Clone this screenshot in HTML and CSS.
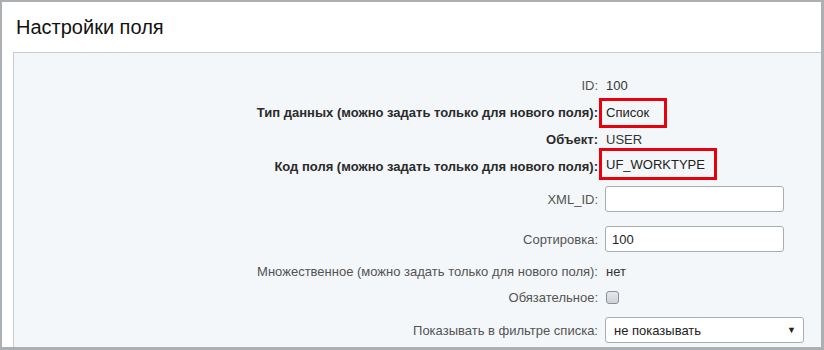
FILE: index.html
```html
<!DOCTYPE html>
<html lang="ru">
<head>
<meta charset="utf-8">
<title>Настройки поля</title>
<link rel="stylesheet" href="styles.css">
</head>
<body>
<div class="frame">
  <div class="header">Настройки поля</div>
  <div class="panel">
    <div class="row r-id">
      <div class="label">ID:</div>
      <div class="value">100</div>
    </div>
    <div class="row r-std">
      <div class="label bold">Тип данных (можно задать только для нового поля):</div>
      <div class="value"><span class="mark mark-type">Список</span></div>
    </div>
    <div class="row r-std">
      <div class="label bold">Объект:</div>
      <div class="value">USER</div>
    </div>
    <div class="row r-std">
      <div class="label bold">Код поля (можно задать только для нового поля):</div>
      <div class="value"><span class="mark mark-code">UF_WORKTYPE</span></div>
    </div>
    <div class="row r-xml">
      <div class="label">XML_ID:</div>
      <div class="value"><input class="text-input" type="text" value=""></div>
    </div>
    <div class="row r-sort">
      <div class="label">Сортировка:</div>
      <div class="value"><input class="text-input" type="text" value="100"></div>
    </div>
    <div class="row r-multi">
      <div class="label">Множественное (можно задать только для нового поля):</div>
      <div class="value">нет</div>
    </div>
    <div class="row r-req">
      <div class="label">Обязательное:</div>
      <div class="value"><span class="checkbox"></span></div>
    </div>
    <div class="row r-filter">
      <div class="label">Показывать в фильтре списка:</div>
      <div class="value"><div class="select"><span>не показывать</span><span class="arrow">▼</span></div></div>
    </div>
  </div>
</div>
</body>
</html>
```
FILE: styles.css
```css
html, body {
  margin: 0;
  padding: 0;
  background: #ffffff;
}
body {
  font-family: "Liberation Sans", Arial, sans-serif;
  font-size: 13px;
  color: #333333;
}
.frame {
  width: 824px;
  height: 350px;
  box-sizing: border-box;
  border: 2px solid #adb0b3;
  border-right-width: 3px;
  border-bottom-width: 3px;
  display: flex;
  flex-direction: column;
  overflow: hidden;
  background: #ffffff;
}
.header {
  height: 50px;
  flex: none;
  box-sizing: border-box;
  padding: 14px 0 0 14px;
  font-size: 20px;
  line-height: 23px;
  color: #111111;
}
.panel {
  flex: 1;
  margin-left: 11px;
  border-top: 1px solid #c9cdd1;
  border-left: 1px solid #c9cdd1;
  background: #f4f7f9;
  padding-top: 19px;
  overflow: hidden;
}
.row {
  display: flex;
  align-items: center;
}
.label {
  width: 584px;
  flex: none;
  text-align: right;
  color: #535353;
  white-space: nowrap;
}
.label.bold {
  font-weight: bold;
  color: #2a2a2a;
}
.value {
  margin-left: 8px;
  display: flex;
  align-items: center;
  color: #333333;
}
.r-id, .r-std { height: 27px; }
.r-xml { height: 38px; }
.r-sort { height: 42px; }
.r-multi { height: 22px; }
.r-req { height: 30px; }
.r-filter { height: 36px; }

.mark {
  display: inline-flex;
  align-items: center;
  box-sizing: border-box;
  border: 3px solid #e8000b;
  margin-left: -7px;
  padding-left: 4px;
  color: #222222;
}
.mark-type {
  width: 68px;
  height: 30px;
}
.mark-code {
  width: 118px;
  height: 32px;
  margin-bottom: 5px;
}
.text-input {
  box-sizing: border-box;
  width: 179px;
  height: 26px;
  margin: 0 0 0 -1px;
  border: 1px solid #a8adb2;
  border-radius: 3px;
  background: #ffffff;
  padding: 0 6px;
  font-family: "Liberation Sans", Arial, sans-serif;
  font-size: 13px;
  color: #222222;
  outline: none;
}
.checkbox {
  display: block;
  width: 13px;
  height: 13px;
  box-sizing: border-box;
  border: 1px solid #8c9196;
  border-radius: 3px;
  background: linear-gradient(#e6e8ea, #cfd3d7);
}
.select {
  box-sizing: border-box;
  width: 199px;
  height: 26px;
  margin-left: -1px;
  border: 1px solid #a8adb2;
  border-radius: 3px;
  background: #ffffff;
  display: flex;
  align-items: center;
  justify-content: space-between;
  padding: 0 7px 0 8px;
  color: #222222;
}
.arrow {
  font-size: 9px;
  color: #222222;
}
```
